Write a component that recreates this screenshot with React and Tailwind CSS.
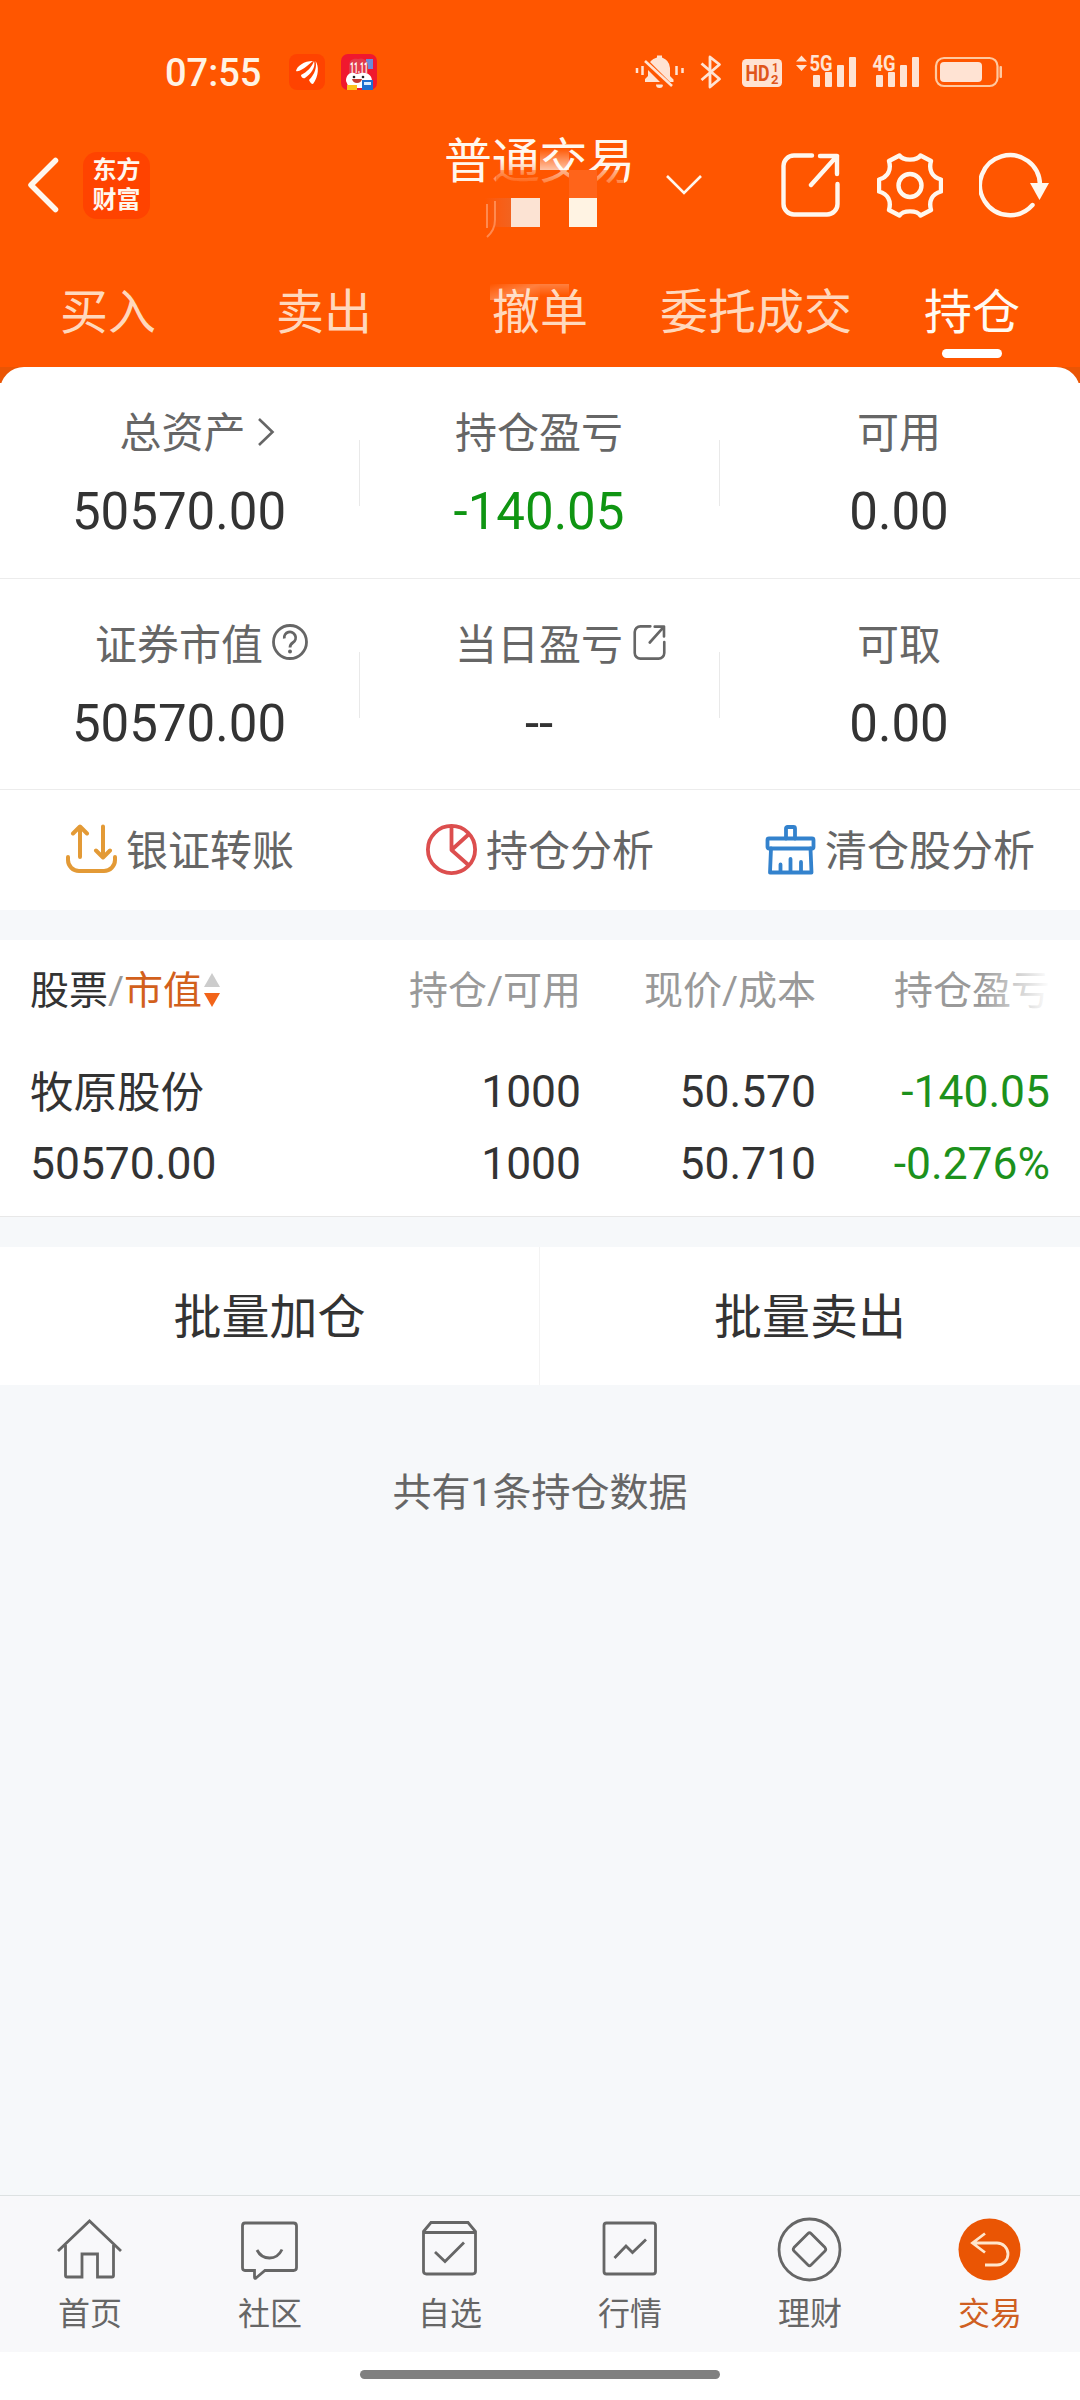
const tabs = ["买入", "卖出", "撤单", "委托成交", "持仓"];

function BackIcon() {
  return (
    <svg className="w-8 h-14" viewBox="0 0 32 56" fill="none" stroke="currentColor" strokeWidth="5.500" strokeLinecap="round" strokeLinejoin="round">
      <path d="M28.500 3.500L4 28L28.500 52.500" />
    </svg>
  );
}

function ShareIcon({ className, strokeWidth = 4 }) {
  return (
    <svg className={className} viewBox="0 0 59 64" fill="none" stroke="currentColor" strokeWidth={strokeWidth} strokeLinecap="round" strokeLinejoin="round">
      <path d="M31 2.500H13A10.500 10.500 0 0 0 2.500 13V51A10.500 10.500 0 0 0 13 61.500H46A10.500 10.500 0 0 0 56.500 51V31" />
      <path d="M39 3H56V21M56 3L30 32" />
    </svg>
  );
}

function GearIcon() {
  return (
    <svg className="w-[66px] h-[65px]" viewBox="0 0 66 65" fill="none" stroke="currentColor" strokeWidth="4.400" strokeLinejoin="round">
      <path d="M22.500 2.500C26 8 40 8 43.500 2.500L54 8C51.500 17 55 24 64 26.500V38.500C55 41 51.500 48 54 57L43.500 62.500C40 57 26 57 22.500 62.500L12 57C14.500 48 11 41 2 38.500V26.500C11 24 14.500 17 12 8Z" />
      <circle cx="33" cy="32.500" r="11.500" />
    </svg>
  );
}

function RefreshIcon() {
  return (
    <svg className="w-[70px] h-[66px]" viewBox="0 0 70 66" fill="none" stroke="currentColor" strokeWidth="4.400" strokeLinecap="round">
      <path d="M53.500 53A30 30 0 1 1 61 33" />
      <path d="M51 31H70L60.500 48Z" fill="currentColor" stroke="none" />
    </svg>
  );
}

function StatusIcons() {
  return (
    <svg className="w-[368px] h-9 overflow-visible" viewBox="635 54 368 36" fill="#ffe3d3">
      {/* muted bell */}
      <path d="M645 82V79L648 76V68A12 12 0 0 1 657 57.500V55.500H662V57.500A12 12 0 0 1 670 68V76L673.500 79.500V82Z" />
      <path d="M656 84.500H663A3.500 3.500 0 0 1 656 84.500Z" />
      <path d="M643 60L670 87" stroke="#ff5600" strokeWidth="7" />
      <path d="M645 61L672 86" stroke="#ffe3d3" strokeWidth="2.500" />
      <path d="M637 68V73M642.500 66V75M676.500 66V75M682.500 68V73" stroke="#ffe3d3" strokeWidth="2.500" />
      {/* bluetooth */}
      <path d="M701.500 63.500L719.500 79L710 87V57L719.500 64.500L701.500 80" fill="none" stroke="#ffe3d3" strokeWidth="2.800" strokeLinejoin="round" />
      {/* HD */}
      <rect x="742" y="59" width="40" height="28" rx="4.500" />
      <g fill="#e0561b" fontFamily="Roboto, sans-serif" fontWeight="700">
        <text x="745.500" y="81" fontSize="21.500" textLength="24" lengthAdjust="spacingAndGlyphs">HD</text>
        <text x="772" y="71.500" fontSize="12" textLength="6.500" lengthAdjust="spacingAndGlyphs">1</text>
        <text x="771" y="84" fontSize="13" textLength="7.500" lengthAdjust="spacingAndGlyphs">2</text>
      </g>
      {/* signals */}
      <path d="M796 61.500L801.500 55.500L807 61.500ZM796 65L801.500 71L807 65Z" />
      <g fontFamily="Roboto, sans-serif" fontWeight="700" fontSize="21.500">
        <text x="809.500" y="70.500" textLength="23" lengthAdjust="spacingAndGlyphs">5G</text>
        <text x="872.500" y="70.500" textLength="23" lengthAdjust="spacingAndGlyphs">4G</text>
      </g>
      <rect x="813" y="75" width="7" height="12" rx="1" />
      <rect x="825" y="72" width="7" height="15" rx="1" />
      <rect x="837" y="65" width="7" height="22" rx="1" />
      <rect x="849" y="57" width="7" height="30" rx="1" />
      <rect x="876" y="75" width="7" height="12" rx="1" />
      <rect x="888" y="72" width="7" height="15" rx="1" />
      <rect x="900" y="65" width="7" height="22" rx="1" />
      <rect x="912" y="57" width="7" height="30" rx="1" />
      {/* battery */}
      <rect x="936" y="58" width="61.500" height="28" rx="8" fill="none" stroke="#ffc9a0" strokeWidth="2.200" />
      <rect x="940" y="62" width="42" height="20" rx="4" />
      <rect x="999.500" y="66" width="2.500" height="12" rx="1" fill="#ffc9a0" />
    </svg>
  );
}

function StatusBar() {
  return (
    <div className="h-36 flex items-center pl-[165px] pr-[77px]">
      <span className="w-[124px] text-[38px] leading-[44px] pt-0.5 font-medium text-[#fff3e4]">07:55</span>
      <svg className="w-9 h-9" viewBox="0 0 36 36">
        <rect width="36" height="36" rx="8" fill="#ff4300" />
        <path d="M7 17C8 12 15 7 24 7C22 9 20 10 18 12C14 15 10 18 7 17Z" fill="#fff" />
        <path d="M12 21C18 18 23 13 25 7C27 13 22 20 16 24C14 25 12 23 12 21Z" fill="#fff" />
        <path d="M20 26C26 20 28 13 26.500 7C30 12 30 22 24 30C22 30 21 28 20 26Z" fill="#fff" />
      </svg>
      <svg className="w-9 h-9 ml-4 overflow-visible" viewBox="0 0 36 36">
        <rect width="36" height="36" rx="7" fill="#f0182e" />
        <path d="M25 5H32V15H25Z" fill="#6a8ad8" />
        <path d="M8 12C8 6 12 4 17 5C23 3 27 7 27 13V20H8Z" fill="#e23a4a" />
        <path d="M5 27C5 21 9 18 13 19L16 20L20 19C26 18 31 21 31 27V34H8Z" fill="#fff" />
        <text x="9" y="18.500" fontSize="14" fontWeight="700" fill="#fff" textLength="18" lengthAdjust="spacingAndGlyphs" fontFamily="Roboto, sans-serif">11.11</text>
        <circle cx="13" cy="23" r="1.300" fill="#222" />
        <circle cx="22" cy="23" r="1.300" fill="#222" />
        <path d="M11 25H21Q20 29 16 29Q12 29 11 25Z" fill="#c53a30" />
        <path d="M6 31H16V36H6Z" fill="#fbc21b" />
        <path d="M21 26H32V36H21Z" fill="#1e6fd0" />
        <path d="M23 28H30V31H23Z" fill="#d9ecff" />
      </svg>
      <div className="ml-auto">
        <StatusIcons />
      </div>
    </div>
  );
}

function TitleBar() {
  return (
    <div className="h-[82px] flex items-center pl-[27px] text-[#fff7ee]">
      <BackIcon />
      <div className="ml-6 w-[67px] h-[67px] rounded-[14px] bg-[#ff4300] flex flex-col items-center justify-center text-[24px] leading-[30px] font-bold">
        <span>东方</span>
        <span>财富</span>
      </div>
      {/* account name is hidden under a mosaic */}
      <div className="relative ml-[294px] w-48 h-[82px]">
        <div className="-mt-2 text-5xl leading-[52px] tracking-[-0.3px] whitespace-nowrap">普通交易</div>
        <div className="absolute left-[52px] top-4 w-[44px] h-[26px] bg-linear-to-b from-[#ff5600]/0 to-[#ff5600]/70"></div>
        <div className="absolute left-[46px] top-[26px] w-[134px] h-4 bg-linear-to-b from-[#ff5600]/40 to-[#ff5600]/80"></div>
        <div className="absolute left-24 top-1 w-[29px] h-[22px] bg-linear-to-b from-white/0 to-white/65"></div>
        <div className="absolute left-[125px] top-[26px] w-7 h-7 bg-[#ff641a]"></div>
        <div className="absolute left-[41px] top-[54px] w-[26px] h-[29px] bg-linear-to-r from-[#ff5600] to-[#f2631f]"></div>
        <svg className="absolute left-[41px] top-[54px] w-[26px] h-11" viewBox="0 0 26 44" fill="none" stroke="#ff8a50" strokeWidth="2">
          <path d="M2 6V30M10 3V22Q10 32 2 39" />
        </svg>
        <div className="absolute left-[67px] top-[54px] w-[29px] h-[29px] bg-[#fce3d3]"></div>
        <div className="absolute left-[125px] top-[54px] w-7 h-[29px] bg-[#fff3e3]"></div>
      </div>
      <svg className="ml-[30px] w-9 h-5" viewBox="0 0 36 20" fill="none" stroke="currentColor" strokeWidth="2.600">
        <path d="M1 1L18 18L35 1" />
      </svg>
      <ShareIcon className="ml-[79px] w-[59px] h-16" strokeWidth={4.400} />
      <div className="ml-[37px]">
        <GearIcon />
      </div>
      <div className="ml-9">
        <RefreshIcon />
      </div>
    </div>
  );
}

function TabBar() {
  return (
    <div className="h-[141px] grid grid-cols-5 text-5xl leading-[56px]">
      {tabs.map((tab) => (
        <div key={tab} className="relative flex flex-col items-center pt-[59px]">
          {tab === "撤单" && (
            <>
              <div className="absolute left-[58px] top-[58px] w-[50px] h-4 bg-linear-to-br from-white/0 via-white/25 to-white/0"></div>
              <div className="absolute left-[108px] top-[58px] w-[29px] h-3 bg-linear-to-b from-white/25 to-white/0"></div>
            </>
          )}
          <span className={tab === "持仓" ? "text-[#fffaf2]" : "text-[#ffd8bd]"}>{tab}</span>
          {tab === "持仓" && <div className="mt-2 w-[60px] h-[9px] rounded-full bg-white"></div>}
        </div>
      ))}
    </div>
  );
}

function SummaryCell({ label, value, icon, green, last }) {
  return (
    <div className="relative flex flex-col items-center pt-[37px]">
      <div className="relative right-px text-[42px] leading-[60px] text-[#666]">
        {label}
        {icon}
      </div>
      <div className={`mt-[18px] pr-0.5 text-[51px] leading-[60px] ${green ? "text-[#0f9512]" : "text-[#333]"}`}>{value}</div>
      {!last && <div className="absolute right-0 top-[73px] w-px h-[66px] bg-[#e9e9e9]"></div>}
    </div>
  );
}

function Summary() {
  return (
    <div>
      <div className="h-[212px] grid grid-cols-3 border-b border-[#ececec]">
        <SummaryCell
          label={<span className="pl-[7px]">总资产</span>}
          value="50570.00"
          icon={
            <svg className="absolute left-full top-[13px] ml-[11px] w-[18px] h-[30px]" viewBox="0 0 18 30" fill="none" stroke="currentColor" strokeWidth="2.600">
              <path d="M2 2L15.500 15L2 28" />
            </svg>
          }
        />
        <SummaryCell label="持仓盈亏" value="-140.05" green />
        <SummaryCell label="可用" value="0.00" last />
      </div>
      <div className="h-[211px] grid grid-cols-3 border-b border-[#ececec]">
        <SummaryCell
          label="证券市值"
          value="50570.00"
          icon={
            <svg className="absolute left-full top-2 ml-[9px] w-9 h-9" viewBox="0 0 36 36" fill="none" stroke="currentColor" strokeWidth="2.800">
              <circle cx="18" cy="18" r="16.500" />
              <path d="M12.300 14.500A5.700 5.700 0 1 1 21 18.500C18.500 20.200 18 21 18 23.500" />
              <circle cx="18" cy="27.500" r="2" fill="currentColor" stroke="none" />
            </svg>
          }
        />
        <SummaryCell
          label="当日盈亏"
          value="--"
          icon={<ShareIcon className="absolute left-full top-[9px] ml-[9px] w-[35px] h-[35px]" strokeWidth={4.800} />}
        />
        <SummaryCell label="可取" value="0.00" last />
      </div>
    </div>
  );
}

function Actions() {
  return (
    <div className="h-[120px] grid grid-cols-3 pb-0.5 text-[42px] leading-[60px] text-[#666]">
      <div className="flex items-center justify-center gap-[9px]">
        <svg className="w-[51px] h-[51px]" viewBox="0 0 51 51" fill="none" stroke="#e39a36" strokeWidth="4" strokeLinecap="round" strokeLinejoin="round">
          <path d="M14 33V3M7 9.500L14 2.500L21 9.500M37 2.500V33M30 26.500L37 33.500L44 26.500" />
          <path d="M2 33V36A11 11 0 0 0 13 47H38A11 11 0 0 0 49 36V33" />
        </svg>
        <span className="pt-1.5">银证转账</span>
      </div>
      <div className="flex items-center justify-center gap-[9px]">
        <svg className="w-[51px] h-[51px]" viewBox="0 0 51 51" fill="none" stroke="#dc4e4e" strokeWidth="3.800" strokeLinejoin="round">
          <circle cx="25.500" cy="25.500" r="23.600" />
          <path d="M25.500 2V26L43 41.500M25.500 26L43 10" />
        </svg>
        <span className="pt-1.5">持仓分析</span>
      </div>
      <div className="flex items-center justify-center gap-[9px]">
        <svg className="w-[51px] h-[51px]" viewBox="0 0 51 51" fill="none" stroke="#3382cd" strokeWidth="3.800" strokeLinecap="round" strokeLinejoin="round">
          <path d="M21 14.500V4.500A1.500 1.500 0 0 1 22.500 3H28.500A1.500 1.500 0 0 1 30 4.500V14.500" />
          <rect x="2.500" y="14.500" width="46" height="10" rx="1.500" />
          <path d="M6 24.500L5 48.500H46.500L45.500 24.500M15.500 40.500V48M25.500 35V48M36 38V48" />
        </svg>
        <span className="pt-1.5">清仓股分析</span>
      </div>
    </div>
  );
}

function Holdings() {
  return (
    <div className="h-[277px] bg-white border-b border-[#e8e8e8] px-[30px] pt-[21px]">
      <div className="grid grid-cols-[316px_235px_235px_234px] text-[39px] leading-[60px] text-[#999]">
        <div className="flex items-center">
          <span className="text-[#333]">股票</span>
          <span>/</span>
          <span className="text-[#d2601c]">市值</span>
          <svg className="ml-0.5 mb-0.5 w-4 h-9" viewBox="0 0 16 36">
            <path d="M0 15L8 1L16 15Z" fill="#ccc" />
            <path d="M0 21H16L8 35Z" fill="#f26419" />
          </svg>
        </div>
        <div className="text-right">持仓/可用</div>
        <div className="text-right">现价/成本</div>
        <div className="relative text-right">
          持仓盈亏
          <div className="absolute right-0 top-0 w-[70px] h-full bg-linear-to-r from-white/0 to-white"></div>
        </div>
      </div>
      <div className="mt-[35px] grid grid-cols-[316px_235px_235px_234px] text-[44.4px] leading-[72px] text-[#333]">
        <div className="pt-0.5 -mb-0.5 text-[43.5px]">牧原股份</div>
        <div className="text-right">1000</div>
        <div className="text-right">50.570</div>
        <div className="text-right text-[#1c911c]">-140.05</div>
        <div>50570.00</div>
        <div className="text-right">1000</div>
        <div className="text-right">50.710</div>
        <div className="text-right text-[#1c911c]">-0.276%</div>
      </div>
    </div>
  );
}

const navItems = [
  {
    name: "首页",
    icon: <path d="M4 37L35.500 7L67 37M11.500 31V61.500Q11.500 63 13 63H28V40H43.500V63H58Q59.500 63 59.500 61.500V31" />,
  },
  {
    name: "社区",
    icon: (
      <>
        <path d="M11 9H59.500Q62.500 9 62.500 12V53.500Q62.500 56.500 59.500 56.500H31L22 64Q20.500 65 20.500 63V56.500H11Q8.500 56.500 8.500 53.500V12Q8.500 9 11 9Z" />
        <path d="M23 36Q27 44 35.500 44T48 35.500" />
      </>
    ),
  },
  {
    name: "自选",
    icon: (
      <>
        <path d="M9.500 17.500L17 8.500H54L61.500 17.500V57Q61.500 60 58.500 60H12.500Q9.500 60 9.500 57ZM9.500 18.500H61.500" />
        <path d="M21 38L31 47.500L50 28.500" />
      </>
    ),
  },
  {
    name: "行情",
    icon: (
      <>
        <rect x="10" y="9" width="51.500" height="51" rx="2.500" />
        <path d="M20.500 44L32 32L38.500 38.500L52 25.500" />
      </>
    ),
  },
  {
    name: "理财",
    icon: (
      <>
        <circle cx="35.500" cy="35.500" r="30.500" />
        <path d="M34 19.500Q35.500 18 37 19.500L51 33.500Q52.500 35.500 51 37L37 51Q35.500 52.500 34 51L20 37Q18.500 35.500 20 33.500Z" />
      </>
    ),
  },
  {
    name: "交易",
    active: true,
    icon: (
      <>
        <circle cx="35.500" cy="35.500" r="31" fill="#ea5504" stroke="none" />
        <path d="M31 19.500L18.500 29L31 38.500M18.500 29H43A11 11 0 0 1 43 51H31" stroke="#ffe6cc" />
      </>
    ),
  },
];

function BottomNav() {
  return (
    <div className="h-[157px] border-t border-[#dde1e2] bg-[#f8f8fa] grid grid-cols-6">
      {navItems.map((item) => (
        <div key={item.name} className={`flex flex-col items-center pt-[18px] ${item.active ? "text-[#cf5f22]" : "text-[#666]"}`}>
          <svg className="w-[72px] h-[72px]" viewBox="0 0 72 72" fill="none" stroke="currentColor" strokeWidth="2.800">
            {item.icon}
          </svg>
          <span className="mt-[5px] text-[32px] leading-[46px]">{item.name}</span>
        </div>
      ))}
    </div>
  );
}

export default function App() {
  return (
    <div className="w-[1080px] h-[2400px] flex flex-col overflow-hidden bg-[#f6f8fa] font-[Roboto,'Noto_Sans_CJK_SC',sans-serif]">
      <div className="h-[367px] shrink-0 bg-[#ff5600]">
        <StatusBar />
        <TitleBar />
        <TabBar />
      </div>

      <div className="bg-linear-to-b from-[#ea5504] from-[16px] to-white to-[16px]">
        <div className="bg-white rounded-t-[24px]">
          <Summary />
          <Actions />
        </div>
      </div>

      <div className="mt-[30px]">
        <Holdings />
      </div>

      <div className="mt-[30px] h-[138px] bg-white grid grid-cols-2 items-center text-center text-5xl leading-[60px] text-[#333]">
        <div className="h-full flex items-center justify-center pt-1 border-r border-[#f3f3f3]">批量加仓</div>
        <div className="pt-1">批量卖出</div>
      </div>

      <p className="mt-[78px] text-center text-[39px] leading-[60px] text-[#666]">共有1条持仓数据</p>

      <div className="mt-auto">
        <BottomNav />
        <div className="h-12 bg-white flex justify-center pt-[18px]">
          <div className="w-[360px] h-[9px] rounded-full bg-[#808080]"></div>
        </div>
      </div>
    </div>
  );
}
